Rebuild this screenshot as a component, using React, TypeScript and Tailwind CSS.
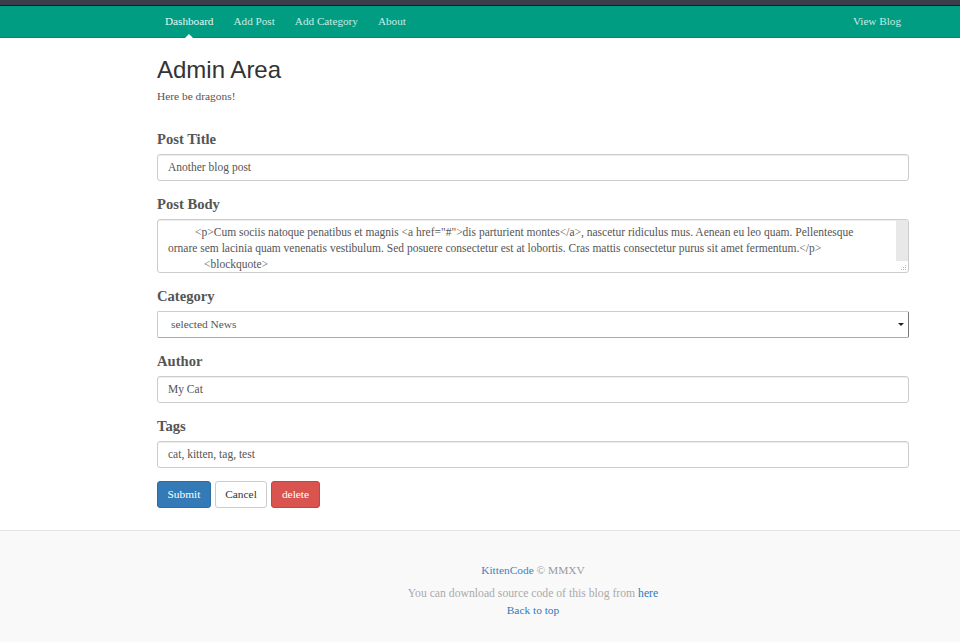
const serif = "font-['Liberation_Serif',serif]";

function Field({ label, children }: { label: string; children: React.ReactNode }) {
  return (
    <div className="flex flex-col">
      <label className="text-[14.6px] font-bold leading-[20px] text-[#555] mb-[5px]">{label}</label>
      {children}
    </div>
  );
}

function TextInput({ value }: { value: string }) {
  return (
    <div className="h-[27px] border border-[#ccc] rounded-[3px] bg-white px-[10px] flex items-center text-[11.5px] text-[#555] shadow-[inset_0_1px_1px_rgba(0,0,0,0.075)]">
      {value}
    </div>
  );
}

export default function App() {
  return (
    <div className={`${serif} min-h-[642px] bg-white flex flex-col`}>
      <div className="h-[5px] bg-[#3b3f4c]" />
      <div className="h-px bg-[#1c1d22]" />
      <nav className="h-[32px] bg-[#009d82] border-b border-[#008a72]">
        <div className="w-[756px] ml-[155px] flex justify-between h-full">
          <ul className="flex h-full">
            {["Dashboard", "Add Post", "Add Category", "About"].map((l, i) => (
              <li key={l} className="relative h-full">
                <a className={`h-full flex items-center px-[10px] text-[11.2px] ${i === 0 ? "text-[#e6f7f3]" : "text-[#c9ece4]"}`}>
                  {l}
                </a>
                {i === 0 && (
                  <span className="absolute left-1/2 -translate-x-1/2 bottom-[-1px] w-0 h-0 border-x-[4px] border-x-transparent border-b-[4px] border-b-white" />
                )}
              </li>
            ))}
          </ul>
          <a className="h-full flex items-center px-[10px] text-[11.2px] text-[#c9ece4]">View Blog</a>
        </div>
      </nav>

      <main className="w-[752px] ml-[157px] pt-[17px] pb-[22px] flex flex-col">
        <h2 className="font-['Liberation_Sans',sans-serif] text-[24px] leading-[30px] text-[#333]">Admin Area</h2>
        <p className="text-[11.4px] text-[#555] mt-[3px] leading-[16px]">Here be dragons!</p>

        <div className="mt-[25px] flex flex-col gap-[13px]">
          <Field label="Post Title">
            <TextInput value="Another blog post" />
          </Field>
          <Field label="Post Body">
            <div className="relative h-[54px] border border-[#ccc] rounded-[3px] bg-white overflow-hidden shadow-[inset_0_1px_1px_rgba(0,0,0,0.075)]">
              <div className="pl-[10px] pt-[4px] text-[11.5px] leading-[16px] text-[#555] whitespace-nowrap">
                <div className="pl-[27px]">
                  {"<p>Cum sociis natoque penatibus et magnis <a href=\"#\">dis parturient montes</a>, nascetur ridiculus mus. Aenean eu leo quam. Pellentesque"}
                </div>
                <div>{"ornare sem lacinia quam venenatis vestibulum. Sed posuere consectetur est at lobortis. Cras mattis consectetur purus sit amet fermentum.</p>"}</div>
                <div className="pl-[36px]">{"<blockquote>"}</div>
              </div>
              <div className="absolute right-0 top-0 w-[12px] h-[41px] bg-[#e8e8e8]" />
              <svg className="absolute right-[1px] bottom-[1px]" width="8" height="8" viewBox="0 0 8 8">
                <g fill="#b5b5b5">
                  <rect x="6" y="2" width="1" height="1" />
                  <rect x="4" y="4" width="1" height="1" />
                  <rect x="6" y="4" width="1" height="1" />
                  <rect x="2" y="6" width="1" height="1" />
                  <rect x="4" y="6" width="1" height="1" />
                  <rect x="6" y="6" width="1" height="1" />
                </g>
              </svg>
            </div>
          </Field>
          <Field label="Category">
            <div className="h-[27px] border border-[#ccc] border-r-[#777] border-b-[#aaa] rounded-[2px] bg-white pl-[13px] pr-[4px] flex items-center justify-between text-[11.4px] text-[#555]">
              <span>selected News</span>
              <span className="w-0 h-0 border-x-[3px] border-x-transparent border-t-[3px] border-t-[#222]" />
            </div>
          </Field>
          <Field label="Author">
            <TextInput value="My Cat" />
          </Field>
          <Field label="Tags">
            <TextInput value="cat, kitten, tag, test" />
          </Field>
        </div>

        <div className="mt-[13px] flex gap-[4px] text-[11.4px]">
          <button className="h-[27px] w-[54px] rounded-[3px] bg-[#337ab7] border border-[#2e6da4] text-white">Submit</button>
          <button className="h-[27px] w-[52px] rounded-[3px] bg-white border border-[#ccc] text-[#333]">Cancel</button>
          <button className="h-[27px] w-[49px] rounded-[3px] bg-[#d9534f] border border-[#d43f3a] text-white">delete</button>
        </div>
      </main>

      <footer className="flex-1 bg-[#f9f9f9] border-t border-[#e5e5e5] pt-[31px] pb-[24px] text-[11.4px] leading-[16px] text-[#999]">
        <div className="w-[752px] ml-[157px] text-center">
          <p>
            <a className="text-[#4a7ebf]">KittenCode</a> © MMXV
          </p>
          <p className="mt-[8px] text-[11.7px] text-[#aaa]">
            You can download source code of this blog from <a className="text-[#337ab7]">here</a>
          </p>
          <p>
            <a className="text-[#337ab7]">Back to top</a>
          </p>
        </div>
      </footer>
    </div>
  );
}
